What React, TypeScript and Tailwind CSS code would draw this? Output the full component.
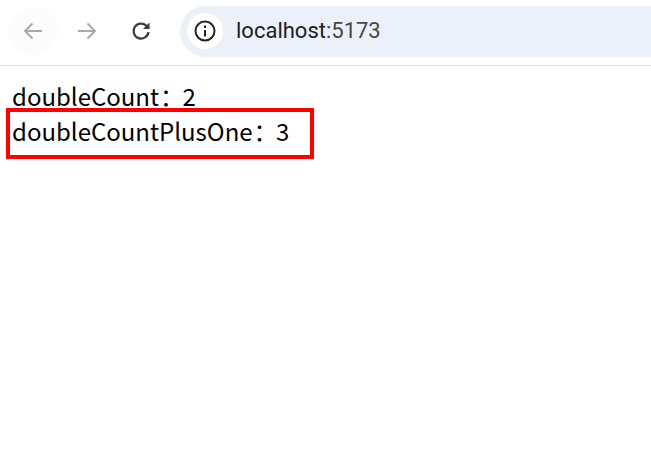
export default function App() {
  return (
    <div className="relative h-[450px] w-[651px] overflow-hidden bg-white font-['Noto_Sans_CJK_SC','Noto_Sans',sans-serif]">
      <header className="flex h-[66px] items-center border-b border-[#e3e3e3] pb-[3px]">
        <div className="ml-[8px] flex h-[48px] w-[50px] items-center justify-center rounded-full bg-[#fcfcfc]">
          <svg width="24" height="24" viewBox="0 0 24 24" fill="none" stroke="#a9a9a9" strokeWidth="2">
            <path d="M21 12H4M11.5 4.5 4 12l7.5 7.5" />
          </svg>
        </div>
        <div className="ml-[4px] flex h-[48px] w-[50px] items-center justify-center">
          <svg width="24" height="24" viewBox="0 0 24 24" fill="none" stroke="#a9a9a9" strokeWidth="2">
            <path d="M3 12h17M12.5 4.5 20 12l-7.5 7.5" />
          </svg>
        </div>
        <div className="ml-[4px] flex h-[48px] w-[50px] items-center justify-center">
          <svg width="24" height="24" viewBox="0 0 24 24" fill="none" stroke="#3c3c3c" strokeWidth="2.2">
            <path d="M19.5 13a7.5 7.5 0 1 1-2.3-6.4L20 9.2" />
            <path d="M20.5 3.5v6.5H14" fill="#3c3c3c" stroke="none" />
          </svg>
        </div>
        <div className="ml-[14px] flex h-[51px] flex-1 items-center rounded-l-full bg-[#ecf1f9] pl-[7px]">
          <div className="flex h-[36px] w-[36px] items-center justify-center rounded-full bg-white">
            <svg width="24" height="24" viewBox="0 0 24 24" fill="none" stroke="#222" strokeWidth="2">
              <circle cx="12" cy="12" r="9.5" />
              <path d="M12 11v6.5M12 6.5v2.4" />
            </svg>
          </div>
          <span className="ml-[13px] font-['Roboto',sans-serif] text-[22px] leading-none text-[#202124]">
            localhost<span className="text-[#474747]">:5173</span>
          </span>
        </div>
      </header>
      <main className="pl-[12px] pt-[13px] text-[24px] leading-[33px] text-black">
        <div>doubleCount<span className="ml-[1px] tracking-[-7px]">：</span> 2</div>
        <div className="mt-[2px]">doubleCountPlusOne<span className="ml-[1px] tracking-[-7px]">：</span> 3</div>
      </main>
      <div className="absolute left-[6px] top-[108px] h-[51px] w-[308px] border-[4px] border-[#ff0000]" />
    </div>
  );
}
